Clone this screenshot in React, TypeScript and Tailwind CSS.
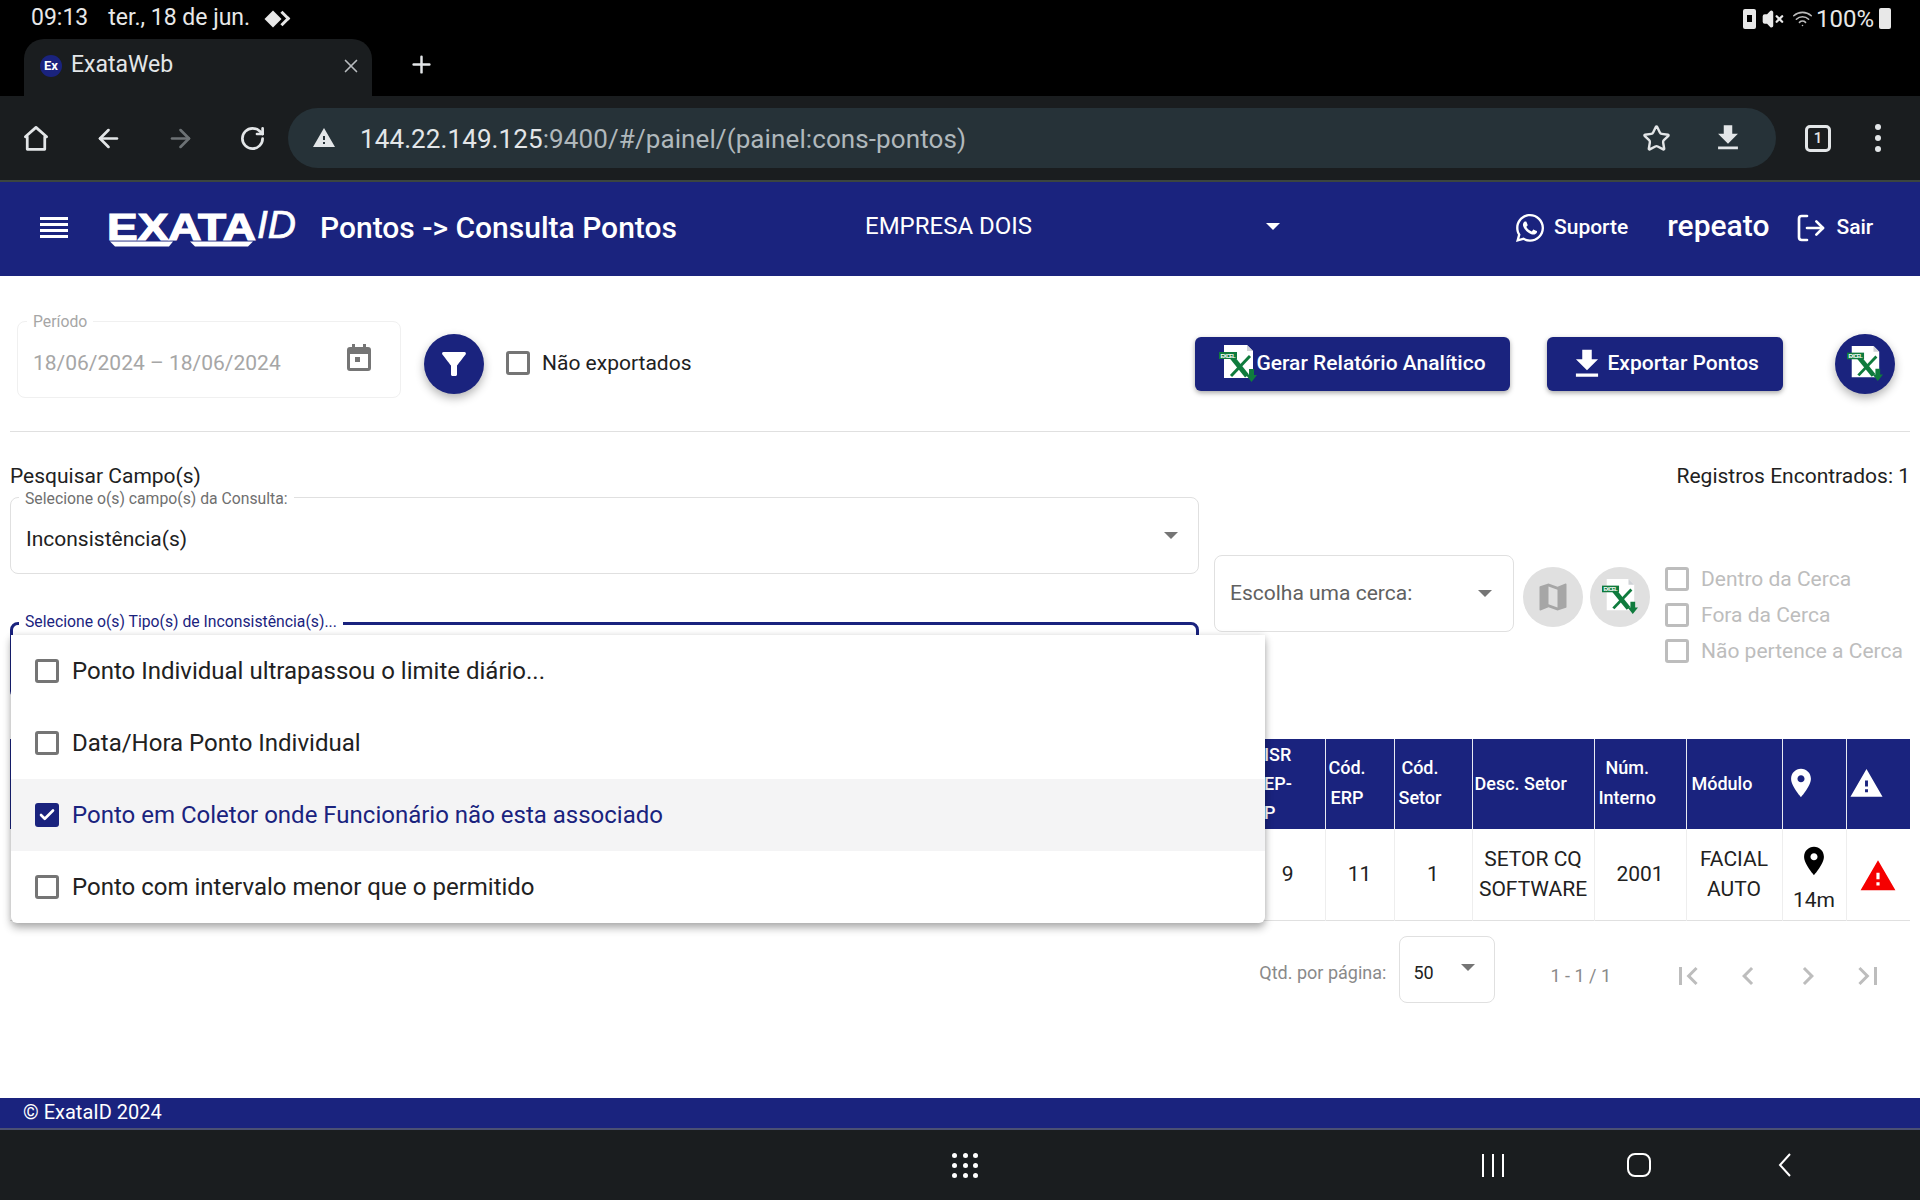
import { ArrowLeft, ArrowRight, Check, LogOut, Plus, RotateCw, Star, VolumeX, Wifi, X } from "lucide-react";
import { FaWhatsapp } from "react-icons/fa";

const PLACE = "M12 2C8.13 2 5 5.13 5 9c0 5.25 7 13 7 13s7-7.75 7-13c0-3.87-3.13-7-7-7zm0 9.5c-1.38 0-2.5-1.12-2.5-2.5s1.12-2.5 2.5-2.5 2.5 1.12 2.5 2.5-1.12 2.5-2.5 2.5z";
const WARNING = "M1 21h22L12 2 1 21zm12-3h-2v-2h2v2zm0-4h-2v-4h2v4z";
const DOWNLOAD = "M19 9h-4V3H9v6H5l7 7 7-7zM5 18v2h14v-2H5z";
const FILTER = "M4.25 5.61C6.27 8.2 10 13 10 13v6c0 .55.45 1 1 1h2c.55 0 1-.45 1-1v-6s3.72-4.8 5.74-7.39c.51-.66.04-1.61-.79-1.61H5.04c-.83 0-1.3.95-.79 1.61z";
const MAP = "M20.5 3l-.16.03L15 5.1 9 3 3.36 4.9c-.21.07-.36.25-.36.48V20.5c0 .28.22.5.5.5l.16-.03L9 18.9l6 2.1 5.64-1.9c.21-.07.36-.25.36-.48V3.5c0-.28-.22-.5-.5-.5zM15 19l-6-2.11V5l6 2.11V19z";
const PAGES = [
  "M18.41 16.59L13.82 12l4.59-4.59L17 6l-6 6 6 6zM6 6h2v12H6z",
  "M15.41 7.41L14 6l-6 6 6 6 1.41-1.41L10.83 12z",
  "M10 6L8.59 7.41 13.17 12l-4.58 4.59L10 18l6-6z",
  "M5.59 7.41L10.18 12l-4.59 4.59L7 18l6-6-6-6zM16 6h2v12h-2z",
];

function Mat({ d, className }: { d: string; className?: string }) {
  return (
    <svg viewBox="0 0 24 24" fill="currentColor" className={className}>
      <path d={d} fillRule="evenodd" />
    </svg>
  );
}

function ExcelIcon({ className }: { className?: string }) {
  return (
    <svg viewBox="0 0 38 38" className={className}>
      <path d="M5 0h23l6 6v27H5z" fill="#fff" />
      <path d="M28 0l6 6h-6z" fill="#cfd2d6" />
      <path d="M12 11l16 20" stroke="#0f7b3d" strokeWidth="5" />
      <path d="M31 11L12 31" stroke="#0f7b3d" strokeWidth="3" />
      <rect x="0" y="7" width="18" height="7" fill="#0f7b3d" />
      <text x="1.5" y="12.6" fontSize="5.5" fontWeight="700" fill="#fff" fontFamily="Liberation Sans, sans-serif" textLength="15">
        EXCEL
      </text>
      <path d="M30 24h5v6h3l-5.5 7-5.5-7h3z" fill="#0f7b3d" />
    </svg>
  );
}

function Logo() {
  return (
    <svg viewBox="0 0 190 40" className="h-[40px] w-[190px] overflow-visible">
      <text x="0" y="32" fontSize="37" fontWeight="700" fill="#fff" stroke="#fff" strokeWidth="1.2" fontFamily="Liberation Sans, sans-serif" textLength="149" lengthAdjust="spacingAndGlyphs">
        EXATA
      </text>
      <text x="150" y="30" fontSize="38" fontStyle="italic" fill="#fff" stroke="#fff" strokeWidth="0.7" fontFamily="Liberation Sans, sans-serif" textLength="39" lengthAdjust="spacingAndGlyphs">
        ID
      </text>
      <polygon points="3,33.5 66,33.5 62,38.5 8,38.5" fill="#fff" />
      <polygon points="83,33.5 146,33.5 141,38.5 88,38.5" fill="#fff" />
    </svg>
  );
}

function Box({ checked, muted }: { checked?: boolean; muted?: boolean }) {
  if (checked) {
    return (
      <span className="flex h-[24px] w-[24px] shrink-0 items-center justify-center rounded-[3px] bg-[#1a237e]">
        <Check size={18} strokeWidth={3.5} className="text-white" />
      </span>
    );
  }
  return <span className={`h-[24px] w-[24px] shrink-0 rounded-[3px] border-[3px] ${muted ? "border-[#bdbdbd]" : "border-[#757575]"}`} />;
}

function Arrow({ className }: { className?: string }) {
  return <span className={`h-0 w-0 border-x-[7px] border-t-[7px] border-x-transparent ${className ?? "border-t-[#757575]"}`} />;
}

function StatusBar() {
  return (
    <div className="flex h-[39px] items-center bg-black pb-[2px] pl-[31px] pr-[29px] text-[23px] text-[#e8e8e8]">
      <span>09:13</span>
      <span className="ml-[20px]">ter., 18 de jun.</span>
      <span className="ml-[17px] flex items-center">
        <span className="h-[12px] w-[12px] rotate-45 bg-[#e8e8e8]" />
        <span className="-ml-[2px] h-[11px] w-[11px] rotate-45 border-r-[3px] border-t-[3px] border-[#e8e8e8]" />
      </span>
      <div className="ml-auto flex items-center">
        <span className="flex h-[20px] w-[13px] items-center justify-center rounded-[2px] bg-[#e8e8e8]">
          <span className="h-[7px] w-[5px] bg-black" />
        </span>
        <VolumeX size={22} strokeWidth={2.5} fill="currentColor" className="ml-[6px]" />
        <Wifi size={21} strokeWidth={1.8} className="ml-[8px] text-[#bbbbbb]" />
        <span className="ml-[3px] text-[24px]">100%</span>
        <span className="ml-[5px] h-[21px] w-[12px] rounded-[2px] bg-[#e8e8e8]" />
      </div>
    </div>
  );
}

function TabStrip() {
  return (
    <div className="flex h-[57px] items-stretch bg-black text-[#e3e6e8]">
      <div className="ml-[24px] flex w-[348px] items-center rounded-t-[20px] bg-[#1a1d1f] pb-[4px] pl-[16px] pr-[10px]">
        <span className="flex h-[22px] w-[22px] items-center justify-center rounded-full bg-[#1a237e] text-[13px] font-bold text-white">Ex</span>
        <span className="ml-[9px] text-[23px]">ExataWeb</span>
        <X size={22} strokeWidth={1.8} className="ml-auto text-[#b8bcbf]" />
      </div>
      <div className="ml-[36px] flex items-center pb-[6px]">
        <Plus size={27} strokeWidth={2.2} />
      </div>
    </div>
  );
}

function Toolbar() {
  return (
    <div className="flex h-[86px] items-center border-b-[2px] border-[#3b453f] bg-[#1a1d1f] text-[#e3e6e8]">
      <span className="flex w-[72px] justify-center">
        <svg viewBox="0 0 24 24" fill="none" stroke="currentColor" strokeWidth="2.2" strokeLinejoin="round" className="h-[30px] w-[30px]">
          <path d="M12 3.5 3.5 11H5v10h14V11h1.5z" />
        </svg>
      </span>
      <span className="flex w-[72px] justify-center"><ArrowLeft size={29} strokeWidth={2.2} /></span>
      <span className="flex w-[72px] justify-center text-[#6d7275]"><ArrowRight size={29} strokeWidth={2.2} /></span>
      <span className="flex w-[72px] justify-center"><RotateCw size={27} strokeWidth={2.4} /></span>
      <div className="flex h-[60px] w-[1488px] items-center rounded-full bg-[#263238] pl-[24px] pr-[31px]">
        <Mat d={WARNING} className="h-[24px] w-[24px]" />
        <span className="ml-[24px] pt-[2px] text-[26px] tracking-[0.1px]">
          144.22.149.125<span className="text-[#b0b8bc]">:9400/#/painel/(painel:cons-pontos)</span>
        </span>
        <Star size={29} strokeWidth={2} className="ml-auto" />
        <Mat d={DOWNLOAD} className="ml-[40px] h-[34px] w-[34px]" />
      </div>
      <span className="ml-[12px] flex w-[60px] justify-center">
        <span className="flex h-[27px] w-[26px] items-center justify-center rounded-[5px] border-[3px] border-[#e3e6e8] text-[15px] font-medium">1</span>
      </span>
      <span className="flex w-[60px] flex-col items-center gap-[5px]">
        <span className="h-[6px] w-[6px] rounded-full bg-[#e3e6e8]" />
        <span className="h-[6px] w-[6px] rounded-full bg-[#e3e6e8]" />
        <span className="h-[6px] w-[6px] rounded-full bg-[#e3e6e8]" />
      </span>
    </div>
  );
}

function AppHeader() {
  return (
    <header className="flex h-[94px] items-center bg-[#1a237e] pb-[3px] pl-[40px] text-white">
      <div className="flex w-[28px] flex-col gap-[3px]">
        <span className="h-[3px] bg-white" />
        <span className="h-[3px] bg-white" />
        <span className="h-[3px] bg-white" />
        <span className="h-[3px] bg-white" />
      </div>
      <div className="ml-[39px]"><Logo /></div>
      <h1 className="ml-[23px] w-[545px] whitespace-nowrap text-[30px] font-medium">Pontos -&gt; Consulta Pontos</h1>
      <span className="-mt-[4px] w-[401px] text-[24px]">EMPRESA DOIS</span>
      <Arrow className="-mt-[2px] border-t-white" />
      <FaWhatsapp className="ml-[234px] h-[32px] w-[32px]" />
      <span className="ml-[8px] text-[21px] font-medium">Suporte</span>
      <span className="-mt-[5px] ml-[39px] text-[30px] font-medium">repeato</span>
      <LogOut size={32} strokeWidth={2} className="ml-[26px] scale-x-[-1] rotate-180" />
      <span className="ml-[9px] text-[21px] font-medium">Sair</span>
    </header>
  );
}

function Outlined({ label, children, className }: { label: string; children: React.ReactNode; className: string }) {
  return (
    <div className={`relative flex items-center rounded-lg border border-[#e0e0e0] px-[15px] ${className}`}>
      <span className="absolute -top-[8px] left-[8px] bg-white px-[6px] text-[15.75px] leading-[18px] text-[#6f6f6f]">{label}</span>
      {children}
    </div>
  );
}

function PeriodRow() {
  return (
    <div className="mx-[10px] flex h-[156px] items-start border-b border-[#e0e0e0]">
      <div className="relative ml-[7px] mt-[45px] flex h-[77px] w-[384px] items-center rounded-lg border border-[#f0f0f0] px-[15px] text-[21px] text-[#a6a6a6]">
        <span className="absolute -top-[9px] left-[9px] bg-white px-[6px] text-[15.75px] leading-[18px] text-[#a6a6a6]">Período</span>
        <span className="pt-[9px]">18/06/2024 – 18/06/2024</span>
        <svg viewBox="0 0 24 27" fill="#757575" className="ml-auto mr-[14px] -mt-[4px] h-[27px] w-[24px]">
          <path d="M5 0h3v3h8V0h3v3h2a3 3 0 0 1 3 3v18a3 3 0 0 1-3 3H3a3 3 0 0 1-3-3V6a3 3 0 0 1 3-3h2zM3 10v14h18V10z" fillRule="evenodd" />
          <rect x="8" y="13" width="5" height="5" />
        </svg>
      </div>
      <button className="ml-[23px] mt-[58px] flex h-[60px] w-[60px] items-center justify-center rounded-full bg-[#1a237e] text-white shadow-[0_4px_10px_rgba(0,0,0,0.3)]">
        <Mat d={FILTER} className="h-[36px] w-[36px]" />
      </button>
      <div className="ml-[22px] mt-[75px] flex items-center">
        <Box />
        <span className="ml-[12px] text-[21px] leading-[24px] text-[#212121]">Não exportados</span>
      </div>
      <button className="ml-[503px] mt-[61px] flex h-[54px] w-[315px] items-center rounded-[6px] bg-[#1a237e] pl-[24px] text-[21px] font-medium text-white shadow-[0_2px_5px_rgba(0,0,0,0.35)]">
        <ExcelIcon className="h-[38px] w-[38px]" />
        <span>Gerar Relatório Analítico</span>
      </button>
      <button className="ml-[37px] mt-[61px] flex h-[54px] w-[236px] items-center rounded-[6px] bg-[#1a237e] pl-[27px] text-[21px] font-medium text-white shadow-[0_2px_5px_rgba(0,0,0,0.35)]">
        <Mat d={DOWNLOAD} className="-ml-[6px] h-[38px] w-[38px]" />
        <span className="ml-[2px]">Exportar Pontos</span>
      </button>
      <button className="ml-[52px] mt-[58px] flex h-[60px] w-[60px] items-center justify-center rounded-full bg-[#1a237e] shadow-[0_4px_10px_rgba(0,0,0,0.3)]">
        <ExcelIcon className="h-[36px] w-[36px]" />
      </button>
    </div>
  );
}

function SearchRow() {
  return (
    <div className="mx-[10px] flex">
      <div className="w-[1189px] pt-[32px]">
        <p className="text-[21px] leading-[24px] text-[#212121]">Pesquisar Campo(s)</p>
        <Outlined label="Selecione o(s) campo(s) da Consulta:" className="mt-[9px] h-[77px]">
          <span className="pt-[9px] text-[21px] text-[#212121]">Inconsistência(s)</span>
          <Arrow className="ml-auto mr-[5px] border-t-[#757575]" />
        </Outlined>
        <div className="relative mt-[48px] h-[77px] rounded-lg border-[3px] border-[#1a237e]">
          <span className="absolute -top-[12px] left-[6px] bg-white px-[6px] text-[15.75px] leading-[18px] text-[#1a237e]">Selecione o(s) Tipo(s) de Inconsistência(s)...</span>
        </div>
      </div>
      <div className="ml-[15px] flex-1 pt-[32px]">
        <p className="text-right text-[21px] leading-[24px] text-[#212121]">Registros Encontrados: 1</p>
        <div className="mt-[67px] flex items-start">
          <div className="flex h-[77px] w-[300px] items-center rounded-lg border border-[#e0e0e0] px-[15px]">
            <span className="text-[21px] text-[#616161]">Escolha uma cerca:</span>
            <Arrow className="ml-auto mr-[6px] border-t-[#757575]" />
          </div>
          <span className="ml-[9px] mt-[12px] flex h-[60px] w-[60px] items-center justify-center rounded-full bg-[#e0e0e0] text-[#a6a6a6]">
            <Mat d={MAP} className="h-[36px] w-[36px]" />
          </span>
          <span className="ml-[7px] mt-[12px] flex h-[60px] w-[60px] items-center justify-center rounded-full bg-[#e0e0e0]">
            <ExcelIcon className="h-[36px] w-[36px]" />
          </span>
          <div className="ml-[15px] mt-[12px] flex flex-col gap-[12px]">
            {["Dentro da Cerca", "Fora da Cerca", "Não pertence a Cerca"].map((label) => (
              <div key={label} className="flex items-center">
                <Box muted />
                <span className="ml-[12px] whitespace-nowrap text-[21px] leading-[24px] text-[#bdbdbd]">{label}</span>
              </div>
            ))}
          </div>
        </div>
      </div>
    </div>
  );
}

function ResultsTable() {
  const th = "border-r border-white/90 pb-[2px] text-left text-[18px] font-medium leading-[29px] text-white";
  const td = "border-r border-[#eeeeee] text-center text-[21px] font-normal leading-[30px] text-[#212121]";
  return (
    <table className="ml-[10px] mt-[40px] w-[1900px] table-fixed border-collapse">
      <thead>
        <tr className="h-[90px] bg-[#1a237e]">
          <th className="w-[1251px]" />
          <th className={`${th} w-[64px] pl-[3px]`}>ISR<br />EP-<br />P</th>
          <th className={`${th} w-[69px] pl-[3px]`}><span className="inline-block text-center leading-[30px]">Cód.<br />ERP</span></th>
          <th className={`${th} w-[78px] pl-[4px]`}><span className="inline-block text-center leading-[30px]">Cód.<br />Setor</span></th>
          <th className={`${th} w-[122px] pl-[2px]`}>Desc. Setor</th>
          <th className={`${th} w-[92px] pl-[4px]`}><span className="inline-block text-center leading-[30px]">Núm.<br />Interno</span></th>
          <th className={`${th} w-[96px] pl-[5px]`}>Módulo</th>
          <th className={`${th} w-[64px] pl-[1px]`}><Mat d={PLACE} className="h-[34px] w-[34px]" /></th>
          <th className="w-[64px] pb-[2px] pl-[2px] text-white"><Mat d={WARNING} className="h-[35px] w-[35px]" /></th>
        </tr>
      </thead>
      <tbody>
        <tr className="h-[91px] border-b border-[#e0e0e0]">
          <td />
          <td className={`${td} pr-[10px]`}>9</td>
          <td className={td}>11</td>
          <td className={td}>1</td>
          <td className={td}>SETOR CQ<br />SOFTWARE</td>
          <td className={td}>2001</td>
          <td className={td}>FACIAL<br />AUTO</td>
          <td className={td}>
            <Mat d={PLACE} className="mx-auto mt-[10px] h-[34px] w-[34px] text-black" />
            <span className="mt-[7px] block">14m</span>
          </td>
          <td className="text-[#f50000]"><Mat d={WARNING} className="mx-auto mt-[4px] h-[38px] w-[38px]" /></td>
        </tr>
      </tbody>
    </table>
  );
}

function Paginator() {
  return (
    <div className="mt-[15px] flex items-start justify-end pr-[22px]">
      <span className="mt-[26px] text-[18px] leading-[21px] text-[#8a8a8a]">Qtd. por página:</span>
      <div className="ml-[13px] flex h-[67px] w-[96px] items-center rounded-lg border border-[#e0e0e0] pl-[13px] pr-[19px]">
        <span className="pt-[7px] text-[18px] text-[#212121]">50</span>
        <Arrow className="ml-auto -mt-[3px] border-t-[#757575]" />
      </div>
      <span className="ml-[55px] mt-[29px] text-[18px] leading-[21px] text-[#8a8a8a]">1 - 1 / 1</span>
      <div className="ml-[47px] mt-[10px] flex text-[#bdbdbd]">
        {PAGES.map((d) => (
          <span key={d} className="flex h-[60px] w-[60px] items-center justify-center">
            <Mat d={d} className="h-[36px] w-[36px]" />
          </span>
        ))}
      </div>
    </div>
  );
}

function OptionsMenu() {
  const options = [
    { label: "Ponto Individual ultrapassou o limite diário...", on: false },
    { label: "Data/Hora Ponto Individual", on: false },
    { label: "Ponto em Coletor onde Funcionário não esta associado", on: true },
    { label: "Ponto com intervalo menor que o permitido", on: false },
  ];
  return (
    <div className="absolute left-[11px] top-[359px] w-[1254px] rounded-b-[6px] bg-white shadow-[0_5px_8px_rgba(0,0,0,0.3),0_0_6px_rgba(0,0,0,0.1)]">
      {options.map((o) => (
        <div key={o.label} className={`flex h-[72px] items-center pl-[24px] text-[24px] ${o.on ? "bg-[#f4f4f5] text-[#1a237e]" : "text-[#212121]"}`}>
          <Box checked={o.on} />
          <span className="ml-[13px]">{o.label}</span>
        </div>
      ))}
    </div>
  );
}

function NavBar() {
  return (
    <div className="flex h-[70px] items-center bg-[#1a1d1f] text-white">
      <div className="ml-[952px] grid w-[26px] grid-cols-3 gap-x-[6px] gap-y-[5px]">
        {Array.from({ length: 9 }, (_, i) => (
          <span key={i} className="h-[5px] w-[5px] rounded-full bg-white" />
        ))}
      </div>
      <div className="ml-[504px] flex gap-[8px]">
        <span className="h-[23px] w-[2px] bg-white" />
        <span className="h-[23px] w-[2px] bg-white" />
        <span className="h-[23px] w-[2px] bg-white" />
      </div>
      <span className="ml-[123px] h-[24px] w-[24px] rounded-[8px] border-[2px] border-white" />
      <svg viewBox="0 0 14 24" fill="none" stroke="currentColor" strokeWidth="2" className="ml-[126px] h-[24px] w-[14px]">
        <path d="M13 1L3 12l10 11" />
      </svg>
    </div>
  );
}

export default function App() {
  return (
    <div className="flex h-[1200px] w-[1920px] flex-col overflow-hidden bg-white [font-family:Roboto,sans-serif]">
      <StatusBar />
      <TabStrip />
      <Toolbar />
      <AppHeader />
      <main className="relative flex-1">
        <PeriodRow />
        <SearchRow />
        <ResultsTable />
        <Paginator />
        <OptionsMenu />
      </main>
      <footer className="flex h-[32px] items-center border-b-[2px] border-[#4b5073] bg-[#1a237e] pb-[2px] pl-[23px] text-[20px] text-white">© ExataID 2024</footer>
      <NavBar />
    </div>
  );
}
